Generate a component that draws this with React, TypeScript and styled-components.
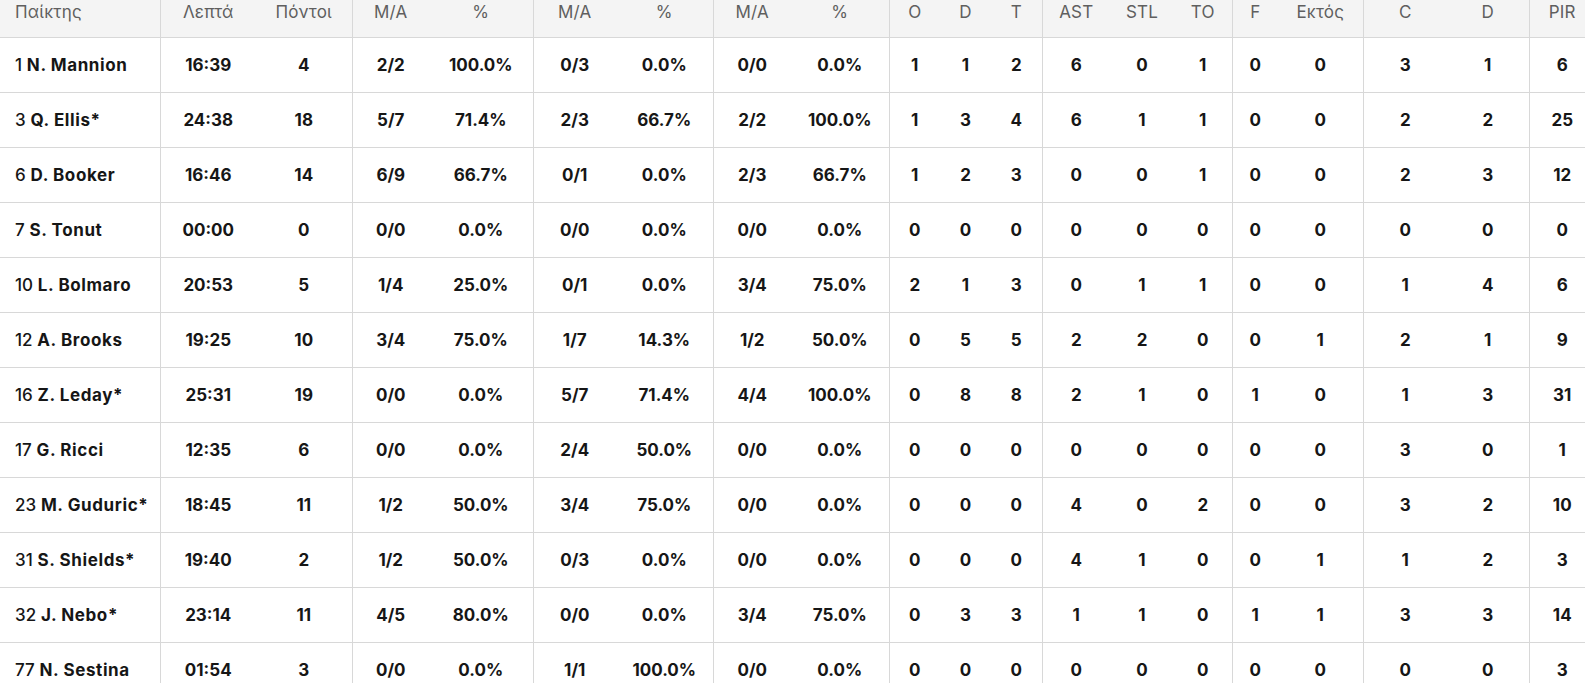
import React from 'react';
import styled, { createGlobalStyle } from 'styled-components';

const GlobalStyle = createGlobalStyle`
  html, body {
    margin: 0;
    padding: 0;
    background: #ffffff;
    overflow: hidden;
  }
  body {
    font-family: Inter, "Noto Sans", "DejaVu Sans", sans-serif;
    color: #161616;
  }
`;

type Col = { key: string; label: string; width: number; group?: boolean };

const columns: Col[] = [
  { key: 'player', label: 'Παίκτης', width: 160 },
  { key: 'min', label: 'Λεπτά', width: 96, group: true },
  { key: 'pts', label: 'Πόντοι', width: 96 },
  { key: 'fg2', label: 'M/A', width: 77, group: true },
  { key: 'fg2p', label: '%', width: 104 },
  { key: 'fg3', label: 'M/A', width: 83, group: true },
  { key: 'fg3p', label: '%', width: 97 },
  { key: 'ft', label: 'M/A', width: 78, group: true },
  { key: 'ftp', label: '%', width: 98 },
  { key: 'o', label: 'O', width: 51, group: true },
  { key: 'd', label: 'D', width: 51 },
  { key: 't', label: 'T', width: 51 },
  { key: 'ast', label: 'AST', width: 68, group: true },
  { key: 'stl', label: 'STL', width: 64 },
  { key: 'to', label: 'TO', width: 58 },
  { key: 'f', label: 'F', width: 46, group: true },
  { key: 'out', label: 'Εκτός', width: 85 },
  { key: 'c', label: 'C', width: 84, group: true },
  { key: 'dd', label: 'D', width: 82 },
  { key: 'pir', label: 'PIR', width: 66, group: true },
];

type Player = [string, string, ...string[]];

const players: Player[] = [
  ['1', 'N. Mannion', '16:39', '4', '2/2', '100.0%', '0/3', '0.0%', '0/0', '0.0%', '1', '1', '2', '6', '0', '1', '0', '0', '3', '1', '6'],
  ['3', 'Q. Ellis*', '24:38', '18', '5/7', '71.4%', '2/3', '66.7%', '2/2', '100.0%', '1', '3', '4', '6', '1', '1', '0', '0', '2', '2', '25'],
  ['6', 'D. Booker', '16:46', '14', '6/9', '66.7%', '0/1', '0.0%', '2/3', '66.7%', '1', '2', '3', '0', '0', '1', '0', '0', '2', '3', '12'],
  ['7', 'S. Tonut', '00:00', '0', '0/0', '0.0%', '0/0', '0.0%', '0/0', '0.0%', '0', '0', '0', '0', '0', '0', '0', '0', '0', '0', '0'],
  ['10', 'L. Bolmaro', '20:53', '5', '1/4', '25.0%', '0/1', '0.0%', '3/4', '75.0%', '2', '1', '3', '0', '1', '1', '0', '0', '1', '4', '6'],
  ['12', 'A. Brooks', '19:25', '10', '3/4', '75.0%', '1/7', '14.3%', '1/2', '50.0%', '0', '5', '5', '2', '2', '0', '0', '1', '2', '1', '9'],
  ['16', 'Z. Leday*', '25:31', '19', '0/0', '0.0%', '5/7', '71.4%', '4/4', '100.0%', '0', '8', '8', '2', '1', '0', '1', '0', '1', '3', '31'],
  ['17', 'G. Ricci', '12:35', '6', '0/0', '0.0%', '2/4', '50.0%', '0/0', '0.0%', '0', '0', '0', '0', '0', '0', '0', '0', '3', '0', '1'],
  ['23', 'M. Guduric*', '18:45', '11', '1/2', '50.0%', '3/4', '75.0%', '0/0', '0.0%', '0', '0', '0', '4', '0', '2', '0', '0', '3', '2', '10'],
  ['31', 'S. Shields*', '19:40', '2', '1/2', '50.0%', '0/3', '0.0%', '0/0', '0.0%', '0', '0', '0', '4', '1', '0', '0', '1', '1', '2', '3'],
  ['32', 'J. Nebo*', '23:14', '11', '4/5', '80.0%', '0/0', '0.0%', '3/4', '75.0%', '0', '3', '3', '1', '1', '0', '1', '1', '3', '3', '14'],
  ['77', 'N. Sestina', '01:54', '3', '0/0', '0.0%', '1/1', '100.0%', '0/0', '0.0%', '0', '0', '0', '0', '0', '0', '0', '0', '0', '0', '3'],
];

const totalWidth = columns.reduce((s, c) => s + c.width, 0);

export default function App() {
  return (
    <>
      <GlobalStyle />
      <Wrapper>
        <Table style={{ width: totalWidth }}>
          <colgroup>
            {columns.map((c) => (
              <col key={c.key} style={{ width: c.width }} />
            ))}
          </colgroup>
          <thead>
            <tr>
              {columns.map((c, i) => (
                <HeadCell key={c.key} $group={!!c.group} $left={i === 0}>
                  {c.label}
                </HeadCell>
              ))}
            </tr>
          </thead>
          <tbody>
            {players.map(([num, name, ...stats]) => (
              <Row key={num}>
                <PlayerCell>
                  <Num>{num}</Num> <Name>{name}</Name>
                </PlayerCell>
                {stats.map((v, i) => (
                  <Cell key={i} $group={!!columns[i + 1].group}>
                    {v}
                  </Cell>
                ))}
              </Row>
            ))}
          </tbody>
        </Table>
      </Wrapper>
    </>
  );
}

const Wrapper = styled.div`
  width: 100%;
  overflow: hidden;
`;

const Table = styled.table`
  border-collapse: collapse;
  table-layout: fixed;
  font-size: 17px;
`;

const HeadCell = styled.th<{ $group: boolean; $left: boolean }>`
  height: 37px;
  padding: 0 0 0 ${({ $left }) => ($left ? '15px' : '0')};
  vertical-align: top;
  line-height: 24px;
  text-align: ${({ $left }) => ($left ? 'left' : 'center')};
  font-weight: 400;
  letter-spacing: 0.2px;
  color: #5f5f5f;
  background: #f4f4f4;
  border-bottom: 1px solid #d8d8d8;
  border-left: ${({ $group }) => ($group ? '1px solid #d8d8d8' : 'none')};
  white-space: nowrap;
`;

const Row = styled.tr`
  height: 55px;
`;

const Cell = styled.td<{ $group: boolean }>`
  padding: 0;
  text-align: center;
  vertical-align: middle;
  font-weight: 700;
  border-bottom: 1px solid #d8d8d8;
  border-left: ${({ $group }) => ($group ? '1px solid #d8d8d8' : 'none')};
  white-space: nowrap;
`;

const PlayerCell = styled.td`
  padding: 0 0 0 15px;
  text-align: left;
  vertical-align: middle;
  border-bottom: 1px solid #d8d8d8;
  white-space: nowrap;
`;

const Num = styled.span`
  font-weight: 500;
`;

const Name = styled.span`
  font-weight: 700;
  letter-spacing: 0.6px;
`;
